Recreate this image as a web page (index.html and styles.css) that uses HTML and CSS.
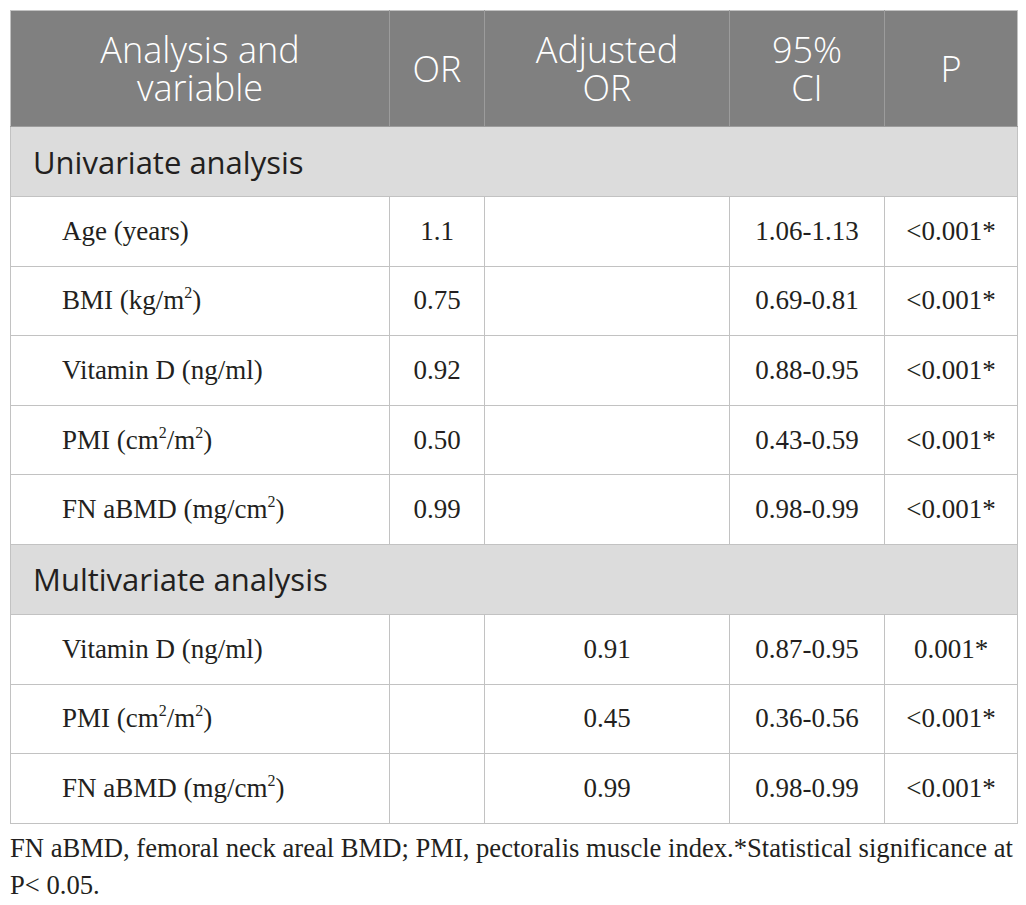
FILE: index.html
```html
<!DOCTYPE html>
<html>
<head>
<meta charset="utf-8">
<link rel="stylesheet" href="styles.css">
</head>
<body>
<table class="tbl">
  <colgroup>
    <col class="c1"><col class="c2"><col class="c3"><col class="c4"><col class="c5">
  </colgroup>
  <thead>
    <tr class="head">
      <th><span class="hl">Analysis and</span><span class="hl">variable</span></th>
      <th><span class="hl">OR</span></th>
      <th><span class="hl">Adjusted</span><span class="hl">OR</span></th>
      <th><span class="hl">95%</span><span class="hl">CI</span></th>
      <th><span class="hl">P</span></th>
    </tr>
  </thead>
  <tbody>
    <tr class="section"><td colspan="5">Univariate analysis</td></tr>
    <tr class="row"><td class="name">Age (years)</td><td>1.1</td><td></td><td>1.06-1.13</td><td>&lt;0.001*</td></tr>
    <tr class="row"><td class="name">BMI (kg/m<sup>2</sup>)</td><td>0.75</td><td></td><td>0.69-0.81</td><td>&lt;0.001*</td></tr>
    <tr class="row"><td class="name">Vitamin D (ng/ml)</td><td>0.92</td><td></td><td>0.88-0.95</td><td>&lt;0.001*</td></tr>
    <tr class="row"><td class="name">PMI (cm<sup>2</sup>/m<sup>2</sup>)</td><td>0.50</td><td></td><td>0.43-0.59</td><td>&lt;0.001*</td></tr>
    <tr class="row"><td class="name">FN aBMD (mg/cm<sup>2</sup>)</td><td>0.99</td><td></td><td>0.98-0.99</td><td>&lt;0.001*</td></tr>
    <tr class="section"><td colspan="5">Multivariate analysis</td></tr>
    <tr class="row"><td class="name">Vitamin D (ng/ml)</td><td></td><td>0.91</td><td>0.87-0.95</td><td>0.001*</td></tr>
    <tr class="row"><td class="name">PMI (cm<sup>2</sup>/m<sup>2</sup>)</td><td></td><td>0.45</td><td>0.36-0.56</td><td>&lt;0.001*</td></tr>
    <tr class="row"><td class="name">FN aBMD (mg/cm<sup>2</sup>)</td><td></td><td>0.99</td><td>0.98-0.99</td><td>&lt;0.001*</td></tr>
  </tbody>
</table>
<p class="note">FN aBMD, femoral neck areal BMD; PMI, pectoralis muscle index.*Statistical significance at P&lt; 0.05.</p>
</body>
</html>
```
FILE: styles.css
```css
html, body {
  margin: 0;
  padding: 0;
  background: #ffffff;
}
body {
  padding: 10px 10px 0 10px;
  color: #231f20;
  font-family: "Liberation Serif", "Times New Roman", serif;
}
.tbl {
  border-collapse: collapse;
  width: 1007px;
  table-layout: fixed;
}
.c1 { width: 379px; }
.c2 { width: 95px; }
.c3 { width: 245px; }
.c4 { width: 155px; }
.c5 { width: 133px; }
.tbl th, .tbl td {
  border: 1px solid #c2c2c2;
  padding: 0;
  vertical-align: middle;
}
.head th {
  background: #808080;
  color: #ffffff;
  font-family: "Open Sans", "Liberation Sans", sans-serif;
  font-weight: 300;
  font-size: 36px;
  line-height: 38px;
  height: 115px;
  text-align: center;
  border-color: #9c9c9c;
  border-top-color: #c2c2c2;
}
.head th:first-child { border-left-color: #c2c2c2; }
.head th:last-child { border-right-color: #c2c2c2; }
.hl {
  display: block;
  height: 38px;
  line-height: 38px;
  overflow: visible;
}
.section td {
  background: #dcdcdc;
  font-family: "Open Sans", "Liberation Sans", sans-serif;
  font-size: 31px;
  height: 69px;
  padding-left: 22px;
  color: #231f20;
}
.row td {
  height: 68.6px;
  font-size: 27px;
  text-align: center;
}
.row td.name {
  text-align: left;
  padding-left: 51px;
}
sup {
  font-size: 16px;
  line-height: 0;
  vertical-align: 11px;
}
.note {
  margin: 6px 0 0 0;
  font-size: 26.6px;
  line-height: 37px;
  width: 1016px;
}
```
